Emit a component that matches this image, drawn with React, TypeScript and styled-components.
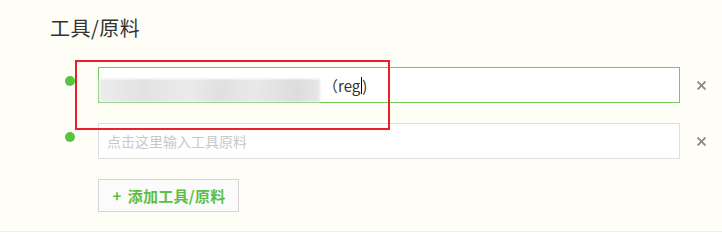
import React from "react";
import styled, { createGlobalStyle } from "styled-components";

const Global = createGlobalStyle`
  html, body { margin: 0; padding: 0; background: #ffffff; }
  body { font-family: "Microsoft YaHei", "Noto Sans CJK SC", "Liberation Sans", sans-serif; }
`;

const Panel = styled.section`
  position: relative;
  background: #fefef6;
  border-bottom: 1px solid #ececec;
  height: 232px;
  box-sizing: border-box;
  padding: 14px 0 0 50px;
`;

const Title = styled.h2`
  margin: 0;
  font-size: 20px;
  font-weight: normal;
  color: #333;
  line-height: 28px;
  letter-spacing: 0.5px;
`;

const List = styled.div`
  display: flex;
  flex-direction: column;
  gap: 20px;
  margin-top: 25px;
  padding-left: 15px;
`;

const Row = styled.div`
  display: flex;
  align-items: center;
`;

const Dot = styled.span`
  width: 10px;
  height: 10px;
  border-radius: 50%;
  background: #58c33e;
  margin-right: 23px;
  margin-top: -8px;
  flex: none;
`;

const Field = styled.div<{ $active?: boolean }>`
  width: 582px;
  height: 36px;
  box-sizing: border-box;
  border: 1px solid ${(p) => (p.$active ? "#74c95c" : "#dedede")};
  background: #fff;
  display: flex;
  align-items: center;
  font-size: 14px;
  color: #333;
  padding-left: ${(p) => (p.$active ? "0" : "8px")};
`;

const Placeholder = styled.span`
  color: #c8c8c8;
  font-size: 14px;
`;

const Blurred = styled.span`
  display: inline-block;
  width: 221px;
  height: 23px;
  margin-top: 10px;
  background: linear-gradient(90deg, #ececec, #e2e2e2 20%, #ebebeb 40%, #e0e0e0 55%, #e9e9e9 70%, #dcdcdc 90%, #e8e8e8);
  filter: blur(1.2px);
`;

const Typed = styled.span`
  margin-left: 3px;
  font-family: "Noto Sans CJK SC", "Liberation Sans", sans-serif;
  font-size: 15px;
  color: #333;
  display: inline-flex;
  align-items: center;
`;

const Caret = styled.span`
  display: inline-block;
  width: 1px;
  height: 17px;
  background: #000;
  margin: 0 0 0 1px;
`;

const Remove = styled.button`
  border: none;
  background: none;
  padding: 0;
  margin-left: 17px;
  width: 9px;
  height: 9px;
  display: flex;
  cursor: pointer;
`;

const AddButton = styled.button`
  margin: 20px 0 0 48px;
  width: 141px;
  height: 33px;
  box-sizing: border-box;
  border: 1px solid #d6d6d6;
  background: #fbfbfb;
  color: #5cbf45;
  font-family: "Noto Sans CJK SC", "Liberation Sans", sans-serif;
  font-weight: bold;
  font-size: 15px;
  letter-spacing: 0.3px;
  display: flex;
  align-items: center;
  justify-content: center;
  gap: 6px;
  cursor: pointer;
  padding: 0 0 0 1px;
`;

const Highlight = styled.div`
  position: absolute;
  left: 75px;
  top: 60px;
  width: 315px;
  height: 70px;
  box-sizing: border-box;
  border: 2px solid #e8202a;
  pointer-events: none;
`;

const Cross = () => (
  <svg width="9" height="9" viewBox="0 0 9 9">
    <path d="M0.5 0.5 L8.5 8.5 M8.5 0.5 L0.5 8.5" stroke="#888" strokeWidth="1.8" />
  </svg>
);

export default function App() {
  return (
    <>
      <Global />
      <Panel>
        <Title>工具/原料</Title>
        <List>
          <Row>
            <Dot />
            <Field $active>
              <Blurred />
              <Typed>
                （reg<Caret />)
              </Typed>
            </Field>
            <Remove aria-label="删除">
              <Cross />
            </Remove>
          </Row>
          <Row>
            <Dot />
            <Field>
              <Placeholder>点击这里输入工具原料</Placeholder>
            </Field>
            <Remove aria-label="删除">
              <Cross />
            </Remove>
          </Row>
        </List>
        <AddButton>
          <span>+</span>
          <span>添加工具/原料</span>
        </AddButton>
        <Highlight />
      </Panel>
    </>
  );
}
